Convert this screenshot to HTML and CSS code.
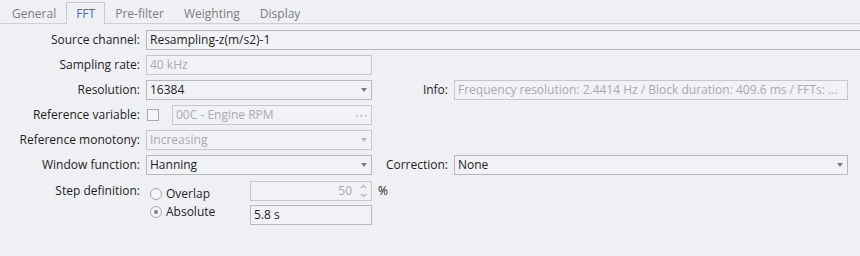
FILE: index.html
```html
<!DOCTYPE html>
<html>
<head>
<meta charset="utf-8">
<link rel="stylesheet" href="styles.css">
</head>
<body>
<div class="tabs">
  <div class="tab">General</div>
  <div class="tab active">FFT</div>
  <div class="tab">Pre-filter</div>
  <div class="tab">Weighting</div>
  <div class="tab">Display</div>
</div>
<div class="form">
  <div class="lbl">Source channel:</div>
  <div class="field wide">Resampling-z(m/s2)-1</div>

  <div class="lbl">Sampling rate:</div>
  <div class="field disabled c2">40 kHz</div>

  <div class="lbl">Resolution:</div>
  <div class="field select c2"><span>16384</span><i class="arrow"></i></div>
  <div class="lbl c3">Info:</div>
  <div class="field disabled c4">Frequency resolution: 2.4414 Hz / Block duration: 409.6 ms / FFTs: ...</div>

  <div class="lbl">Reference variable:</div>
  <div class="refvar c2">
    <span class="check"></span>
    <div class="field disabled select grow"><span>00C - Engine RPM</span>
      <svg class="dots" width="11" height="3" viewBox="0 0 11 3"><rect x="0" y="1" width="1.5" height="1.5" fill="#b0b1b4"/><rect x="4.5" y="1" width="1.5" height="1.5" fill="#b0b1b4"/><rect x="9" y="1" width="1.5" height="1.5" fill="#b0b1b4"/></svg>
    </div>
  </div>

  <div class="lbl">Reference monotony:</div>
  <div class="field disabled select c2"><span>Increasing</span><i class="arrow light"></i></div>

  <div class="lbl">Window function:</div>
  <div class="field select c2"><span>Hanning</span><i class="arrow"></i></div>
  <div class="lbl c3">Correction:</div>
  <div class="field select c4"><span>None</span><i class="arrow"></i></div>

  <div class="lbl step-lbl">Step definition:</div>
  <div class="step">
    <div class="radios">
      <div class="radio"><span class="circle"></span>Overlap</div>
      <div class="radio"><span class="circle on"></span>Absolute</div>
    </div>
    <div class="field disabled spin"><span class="num">50</span>
      <svg class="spinbtn" width="7" height="16" viewBox="0 0 7 16"><path d="M1 5 L3.5 2.5 L6 5" fill="none" stroke="#b3b4b7" stroke-width="1.2"/><path d="M1 11 L3.5 13.5 L6 11" fill="none" stroke="#b3b4b7" stroke-width="1.2"/></svg>
    </div>
    <div class="pct">%</div>
    <div class="field abs">5.8 s</div>
  </div>
</div>
</body>
</html>
```
FILE: styles.css
```css
* { box-sizing: border-box; }
html, body { margin: 0; background: #eff0f3; }
body {
  font-family: "Open Sans", "Noto Sans", sans-serif;
  font-size: 12px;
  color: #1e1e1e;
  width: 860px;
  height: 256px;
  overflow: hidden;
}
.tabs {
  display: flex;
  height: 24px;
  padding: 2px 0 0 2px;
  border-bottom: 1px solid #cfd0d4;
}
.tab {
  padding: 0 9px;
  border: 1px solid transparent;
  border-bottom: none;
  color: #7d7d80;
  line-height: 21px;
  height: 21px;
}
.tab.active {
  border-color: #c8c9cd;
  color: #2f74c9;
  background: #eff0f3;
  height: 22px;
  margin-bottom: -1px;
}
.form {
  display: grid;
  grid-template-columns: 140px 226px 70px 394px 1fr;
  grid-auto-rows: 20px;
  column-gap: 6px;
  row-gap: 5px;
  padding-top: 6px;
}
.lbl {
  grid-column: 1;
  text-align: right;
  line-height: 20px;
  white-space: nowrap;
}
.lbl.c3 { grid-column: 3; }
.c2 { grid-column: 2; }
.c4 { grid-column: 4; }
.field {
  height: 20px;
  border: 1px solid #b7b8bc;
  background: #f1f2f5;
  padding: 0 3px;
  line-height: 18px;
  white-space: nowrap;
  overflow: hidden;
}
.field.wide { grid-column: 2 / -1; margin-right: -6px; }
.field.disabled { color: #a9aaad; border-color: #c6c7cb; }
.select {
  display: flex;
  align-items: center;
  justify-content: space-between;
}
.arrow {
  width: 0;
  height: 0;
  border-left: 3.5px solid transparent;
  border-right: 3.5px solid transparent;
  border-top: 4px solid #7a7b7e;
  margin-right: 1px;
}
.arrow.light { border-top-color: #b9babd; }
.refvar {
  display: flex;
  align-items: center;
}
.check {
  width: 12px;
  height: 12px;
  border: 1px solid #a9aaae;
  background: #f4f5f7;
  margin-left: 1px;
  margin-right: 13px;
}
.grow { flex: 1; }
.dots { margin-right: 1px; }
.step-lbl { grid-row: span 2; align-self: start; margin-top: 1px; }
.step {
  grid-column: 2 / 4;
  grid-row: span 2;
  margin-top: 1px;
  display: grid;
  grid-template-columns: 98px 122px auto;
  grid-template-rows: 20px 20px;
  column-gap: 6px;
  row-gap: 4px;
}
.radios {
  grid-row: 1 / 3;
  grid-column: 1;
  padding-top: 4px;
  padding-left: 4px;
}
.radio {
  display: flex;
  align-items: center;
  height: 18px;
  line-height: 18px;
}
.circle {
  width: 12px;
  height: 12px;
  border-radius: 50%;
  border: 1px solid #a8a9ad;
  background: #f4f5f7;
  margin-right: 4px;
  display: flex;
  align-items: center;
  justify-content: center;
}
.circle.on::after {
  content: "";
  width: 4px;
  height: 4px;
  border-radius: 50%;
  background: #808184;
}
.spin {
  grid-column: 2;
  grid-row: 1;
  display: flex;
  align-items: center;
  justify-content: flex-end;
}
.num { margin-right: 8px; }
.spinbtn { margin-right: 1px; }
.pct { grid-column: 3; grid-row: 1; line-height: 20px; }
.abs { grid-column: 2; grid-row: 2; }
```
